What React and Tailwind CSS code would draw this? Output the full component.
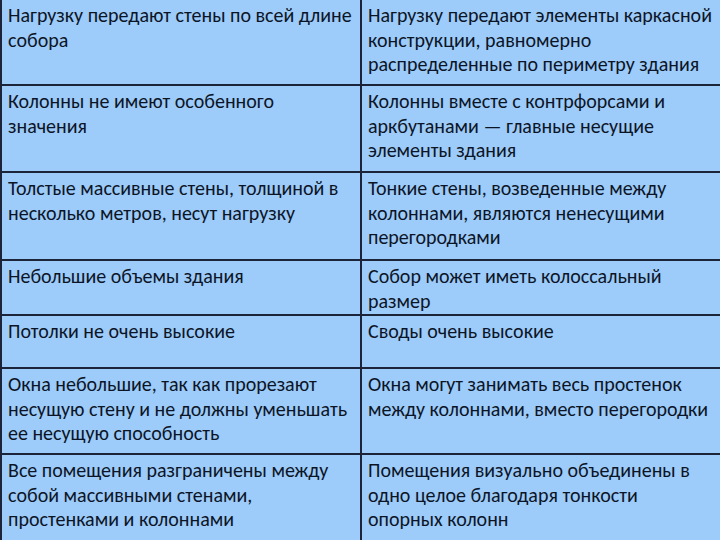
import React from "react";

const rows = [
  {
    h: "h-[86px]",
    l: ["Нагрузку передают стены по всей длине", "собора"],
    r: ["Нагрузку передают элементы каркасной", "конструкции, равномерно", "распределенные по периметру здания"],
  },
  {
    h: "h-[87px]",
    l: ["Колонны не имеют особенного", "значения"],
    r: ["Колонны вместе с контрфорсами и", "аркбутанами — главные несущие", "элементы здания"],
  },
  {
    h: "h-[88px]",
    l: ["Толстые массивные стены, толщиной в", "несколько метров, несут нагрузку"],
    r: ["Тонкие стены, возведенные между", "колоннами, являются ненесущими", "перегородками"],
  },
  {
    h: "h-[55px]",
    l: ["Небольшие объемы здания"],
    r: ["Собор может иметь колоссальный", "размер"],
  },
  {
    h: "h-[53px]",
    l: ["Потолки не очень высокие"],
    r: ["Своды очень высокие"],
  },
  {
    h: "h-[86px]",
    l: ["Окна небольшие, так как прорезают", "несущую стену и не должны уменьшать", "ее несущую способность"],
    r: ["Окна могут занимать весь простенок", "между колоннами, вместо перегородки"],
  },
  {
    h: "h-[90px]",
    l: ["Все помещения разграничены между", "собой массивными стенами,", "простенками и колоннами"],
    r: ["Помещения визуально объединены в", "одно целое благодаря тонкости", "опорных колонн"],
  },
];

function Cell({ lines, cls }) {
  return (
    <div className={"pl-[6px] pt-[3px] " + cls}>
      {lines.map((t, i) => (
        <div key={i} className="whitespace-nowrap leading-[24.5px]">
          {t}
        </div>
      ))}
    </div>
  );
}

export default function App() {
  return (
    <div
      className="w-[720px] h-[540px] overflow-hidden bg-[#9dcbfa] text-[#0c1526] text-[20px] border-l-2 border-[#1b2438]"
      style={{ fontFamily: "Carlito, Lato, 'Noto Sans', sans-serif" }}
    >
      {rows.map((row, i) => (
        <div
          key={i}
          className={
            "grid grid-cols-[360px_1fr] " +
            row.h +
            (i < rows.length - 1 ? " border-b-2 border-[#1b2438]" : "")
          }
        >
          <Cell lines={row.l} cls="border-r-2 border-[#1b2438]" />
          <Cell lines={row.r} cls="" />
        </div>
      ))}
    </div>
  );
}
